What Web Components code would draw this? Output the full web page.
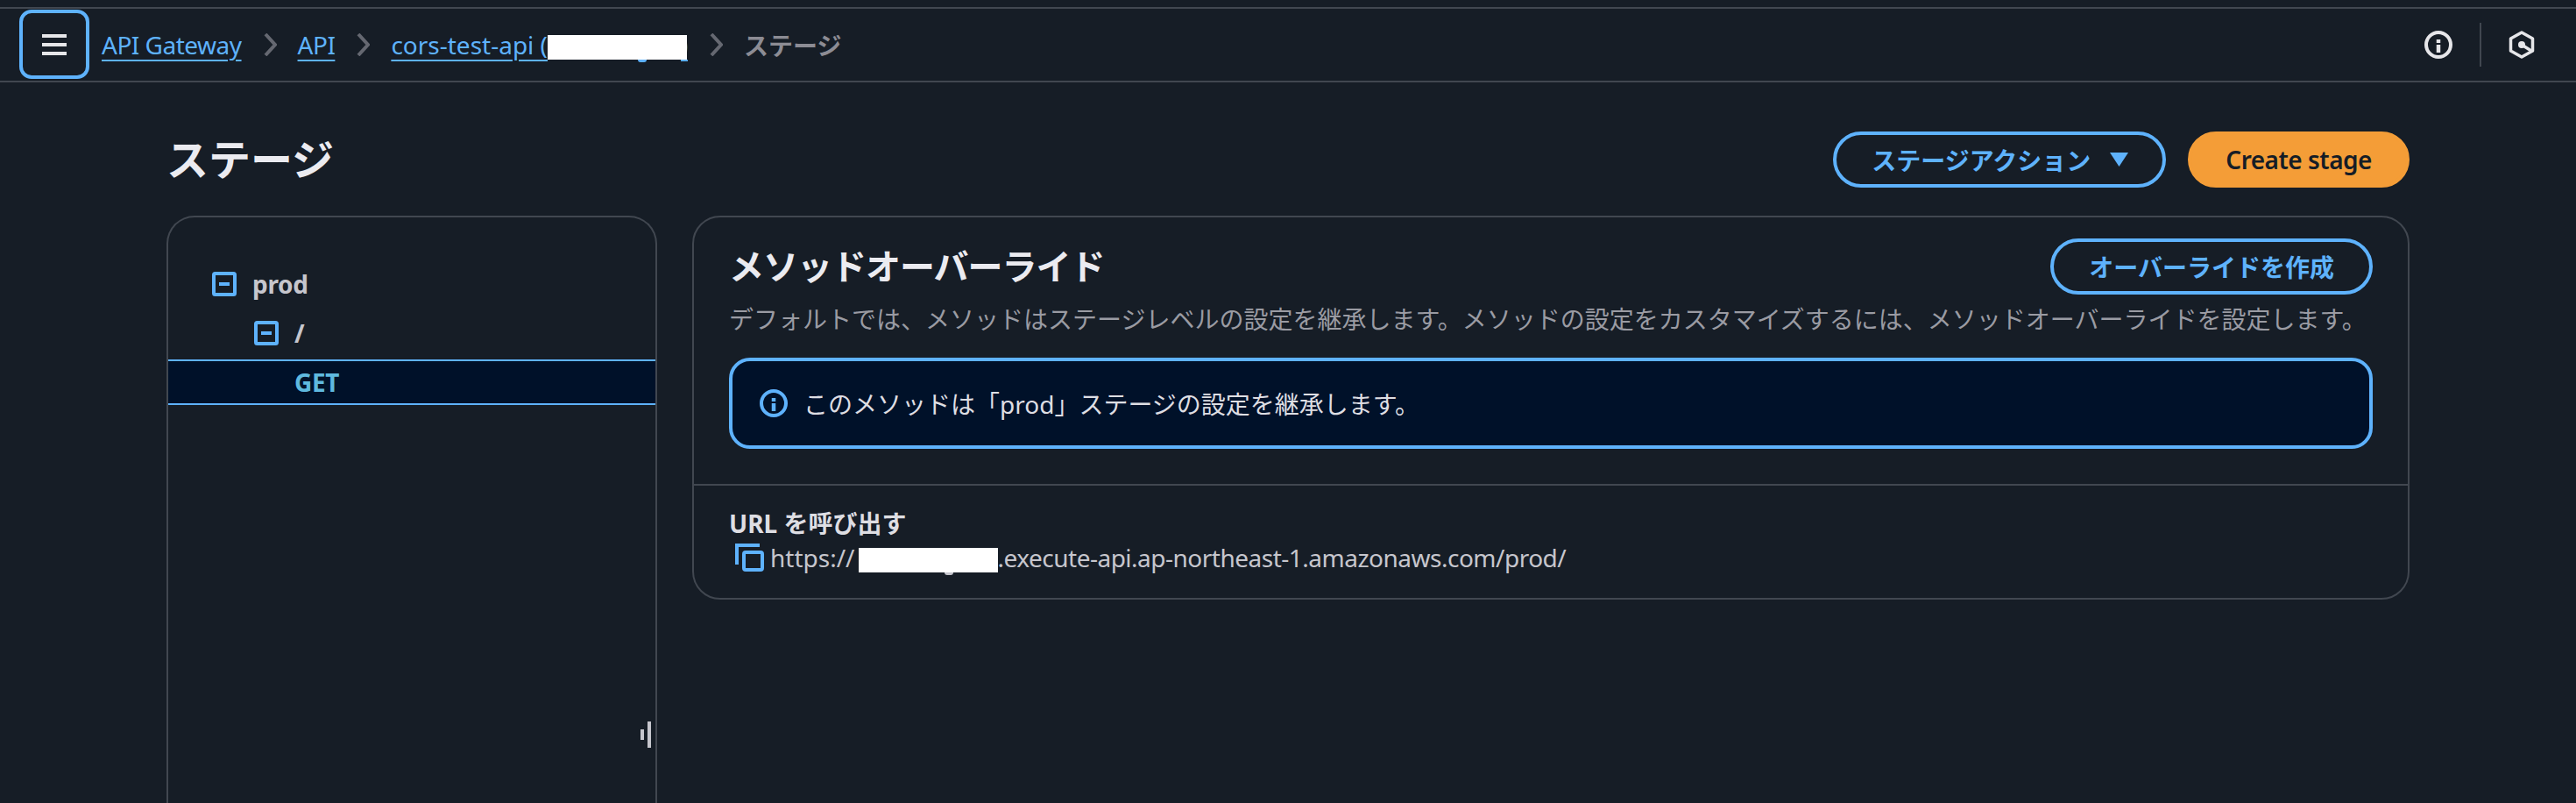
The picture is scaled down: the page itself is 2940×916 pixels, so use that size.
<!doctype html>
<html lang="ja">
<head>
<meta charset="utf-8">
<title>ステージ</title>
<style>
  html,body{margin:0;height:916px;overflow:hidden;background:#161d26;}
  body{font-family:"Noto Sans","Noto Sans CJK JP",sans-serif;font-size:28px;color:#c6c6cd;}
  stage-page{height:100%;}
</style>
</head>
<body>
<stage-page>
  <top-bar slot="top">
    <bread-link>API Gateway</bread-link>
    <bread-link>API</bread-link>
    <bread-link><span style="letter-spacing:0">cors-test-api (</span><redact-box w="159" h="28" tail="103" cut="7"></redact-box>)</bread-link>
    <bread-here>ステージ</bread-here>
  </top-bar>
  <page-head slot="head">ステージ</page-head>
  <stage-tree slot="tree"></stage-tree>
  <method-panel slot="panel"></method-panel>
</stage-page>

<script>
const base=`:host{box-sizing:border-box} *{box-sizing:border-box}`
const BLUE='#5eb2fc'

class StagePage extends HTMLElement{
    constructor(){
        super()
        this.attachShadow({mode:'open'}).innerHTML=`
        <style>${base}
            :host{display:flex;flex-direction:column}
            .strip{height:10px;border-bottom:2px solid #414750;flex:none}
            .main{flex:1;display:flex;flex-direction:column;padding:56px 190px 0;min-height:0}
            .cols{flex:1;display:grid;grid-template-columns:560px 1fr;column-gap:40px;margin-top:32px;min-height:0}
        </style>
        <div class="strip"></div>
        <slot name="top"></slot>
        <div class="main">
            <slot name="head"></slot>
            <div class="cols">
                <slot name="tree"></slot>
                <slot name="panel"></slot>
            </div>
        </div>`
    }
}

class TopBar extends HTMLElement{
    constructor(){
        super()
        this.attachShadow({mode:'open'}).innerHTML=`
        <style>${base}
            :host{display:flex;align-items:center;height:84px;border-bottom:2px solid #414750;padding:1px 0 2px 22px}
            .menu{width:80px;height:79px;border:4px solid ${BLUE};border-radius:14px;background:none;padding:0;display:flex;align-items:center;justify-content:center;margin-right:14px}
            .crumbs{flex:1;display:flex;align-items:center}
            .icons{display:flex;align-items:center}
            .sep{width:2px;height:50px;background:#414750;margin:0 31px}
            svg{display:block}
            .i2{margin-right:47px}
        </style>
        <button class="menu" aria-label="menu">
            <svg width="28" height="24" viewBox="0 0 28 24"><path d="M0 2h28M0 12h28M0 22h28" stroke="#e6e6e9" stroke-width="4"/></svg>
        </button>
        <div class="crumbs"><slot></slot></div>
        <div class="icons">
            <svg width="32" height="32" viewBox="0 0 32 32" fill="none" stroke="#e6e6e9" stroke-width="4"><circle cx="16" cy="16" r="14"/><path d="M16 10v4M16 16v9" stroke-width="4.5"/></svg>
            <div class="sep"></div>
            <svg class="i2" width="30" height="32" viewBox="0 0 30 32" fill="none" stroke="#e6e6e9" stroke-width="3.5"><path d="M15 2 27.5 9v14L15 30 2.500 23V9z" stroke-linejoin="round"/><circle cx="15" cy="16" r="4" fill="#e6e6e9" stroke="none"/><path d="M15 16l11 7"/></svg>
        </div>`
    }
}

class BreadLink extends HTMLElement{
    constructor(){
        super()
        this.attachShadow({mode:'open'}).innerHTML=`
        <style>${base}
            :host{display:inline-flex;align-items:center;color:${BLUE};letter-spacing:-.5px}
            a{color:inherit;text-decoration:underline;text-decoration-thickness:2px;text-underline-offset:6px;white-space:nowrap;line-height:36px}
            svg{margin:0 24px 0 25px;display:block}
        </style>
        <a href="#"><slot></slot></a>
        <svg width="15" height="26" viewBox="0 0 15 26" fill="none" stroke="#656871" stroke-width="4"><path d="M2 1l11 12L2 25"/></svg>`
    }
}

class BreadHere extends HTMLElement{
    constructor(){
        super()
        this.attachShadow({mode:'open'}).innerHTML=`
        <style>:host{display:inline-block;color:#8c8c94;font-weight:700;white-space:nowrap}</style><slot></slot>`
    }
}

// white patch over hidden account ids
class RedactBox extends HTMLElement{
    connectedCallback(){
        if(this.shadowRoot) return
        const w=this.getAttribute('w'),h=this.getAttribute('h')
        const tail=this.getAttribute('tail'),cut=this.getAttribute('cut')||0,pad=this.getAttribute('pad')||0
        this.attachShadow({mode:'open'}).innerHTML=`
        <style>
            :host{display:inline-block;position:relative;z-index:1;width:${w}px;height:${h}px;background:#fff;vertical-align:-6px;margin:0 -${cut}px 0 ${pad}px}
            i{position:absolute;left:${tail}px;top:100%;width:10px;height:3px;background:currentColor;border-radius:0 0 4px 4px}
        </style>
        ${tail?'<i></i>':''}`
    }
}

class AwsButton extends HTMLElement{
    constructor(){
        super()
        this.attachShadow({mode:'open'}).innerHTML=`
        <style>${base}
            :host{display:inline-block}
            button{font:inherit;font-weight:700;height:64px;border-radius:32px;border:4px solid ${BLUE};background:none;color:${BLUE};padding:0 40px;display:flex;align-items:center;gap:22px;white-space:nowrap}
            :host([primary]) button{background:#f49d37;border-color:#f49d37;color:#161d26;font-weight:600;letter-spacing:-.5px;padding:0 39px}
        </style>
        <button><slot></slot></button>`
    }
}

class PageHead extends HTMLElement{
    constructor(){
        super()
        this.attachShadow({mode:'open'}).innerHTML=`
        <style>${base}
            :host{display:flex;align-items:center;justify-content:space-between;height:64px}
            h1{margin:0;font-size:48px;font-weight:700;color:#ebebf0;line-height:64px}
            .btns{display:flex;gap:25px}
            svg{display:block;margin-right:-1px}
        </style>
        <h1><slot></slot></h1>
        <div class="btns">
            <aws-button>ステージアクション<svg width="21" height="16" viewBox="0 0 21 16"><path d="M0 0h21L10.500 16z" fill="${BLUE}"/></svg></aws-button>
            <aws-button primary>Create stage</aws-button>
        </div>`
    }
}

class TreeRow extends HTMLElement{
    constructor(){
        super()
        this.attachShadow({mode:'open'}).innerHTML=`
        <style>${base}
            :host{display:flex;align-items:center;gap:18px;height:56px;font-weight:700;color:#c6c6cd;letter-spacing:-.3px;padding-left:calc(50px + var(--lvl,0) * 48px)}
            :host([selected]){height:52px;margin-top:2px;color:#5fb9df;background:#001129;border-top:2px solid ${BLUE};border-bottom:2px solid ${BLUE}}
            svg{display:block;flex:none}
        </style>
        <svg width="28" height="28" viewBox="0 0 28 28" fill="none"><rect x="2" y="2" width="24" height="24" rx="1.5" stroke="${BLUE}" stroke-width="4"/><path d="M8 14h12" stroke="${BLUE}" stroke-width="4"/></svg>
        <slot></slot>`
        if(this.hasAttribute('leaf')) this.shadowRoot.querySelector('svg').style.visibility='hidden'
    }
}

class StageTree extends HTMLElement{
    constructor(){
        super()
        this.attachShadow({mode:'open'}).innerHTML=`
        <style>${base}
            :host{display:block;border:2px solid #414750;border-bottom:0;border-radius:32px 32px 0 0;padding-top:48px;position:relative}
            .grip{position:absolute;left:539px;top:575px;width:12px;height:30px}
            .grip i{position:absolute;width:4px;background:#c6c6cd}
            .grip i:first-child{left:0;top:9px;height:12px}
            .grip i:last-child{left:8px;top:0;height:30px}
        </style>
        <tree-row>prod</tree-row>
        <tree-row style="--lvl:1">/</tree-row>
        <tree-row style="--lvl:1" selected leaf>GET</tree-row>
        <div class="grip"><i></i><i></i></div>`
    }
}

class InfoAlert extends HTMLElement{
    constructor(){
        super()
        this.attachShadow({mode:'open'}).innerHTML=`
        <style>${base}
            :host{display:flex;align-items:center;gap:18px;height:104px;background:#001129;border:4px solid ${BLUE};border-radius:24px;padding:0 31px;color:#dedee3}
            svg{display:block;flex:none}
        </style>
        <svg width="32" height="32" viewBox="0 0 32 32" fill="none" stroke="${BLUE}" stroke-width="4"><circle cx="16" cy="16" r="14"/><path d="M16 10v4M16 16v9" stroke-width="4.500"/></svg>
        <div><slot></slot></div>`
    }
}

class CopyUrl extends HTMLElement{
    constructor(){
        super()
        this.attachShadow({mode:'open'}).innerHTML=`
        <style>${base}
            :host{display:flex;align-items:center;line-height:36px;white-space:nowrap;color:#c6c6cd;margin-top:3px;letter-spacing:-.5px}
            svg{display:block;flex:none;margin:0 7px 0 7px}
        </style>
        <svg width="33" height="32" viewBox="0 0 33 32" fill="none" stroke="${BLUE}" stroke-width="4"><path d="M2 24V2h26"/><rect x="10" y="10" width="21" height="20" rx="2"/></svg>
        <span><slot></slot></span>`
    }
}

class MethodPanel extends HTMLElement{
    constructor(){
        super()
        this.attachShadow({mode:'open'}).innerHTML=`
        <style>${base}
            :host{display:block;align-self:start;border:2px solid #414750;border-radius:32px;height:438px}
            .top{padding:24px 40px 0;height:306px;border-bottom:2px solid #414750}
            .hd{display:flex;justify-content:space-between;align-items:center;height:64px}
            h2{margin:0;font-size:40px;font-weight:700;color:#ebebf0;line-height:56px;letter-spacing:-1px}
            p{margin:10px 0 26px;color:#9a9ba3;line-height:36px;white-space:nowrap}
            .bot{padding:25px 40px}
            .lbl{font-weight:700;color:#dedee3;line-height:36px}
        </style>
        <div class="top">
            <div class="hd"><h2>メソッドオーバーライド</h2><aws-button>オーバーライドを作成</aws-button></div>
            <p>デフォルトでは、メソッドはステージレベルの設定を継承します。メソッドの設定をカスタマイズするには、メソッドオーバーライドを設定します。</p>
            <info-alert>このメソッドは「prod」ステージの設定を継承します。</info-alert>
        </div>
        <div class="bot">
            <div class="lbl">URL を呼び出す</div>
            <copy-url><span style="letter-spacing:0">https://</span><redact-box w="159" h="28" tail="98" pad="4"></redact-box>.execute-api.ap-northeast-1.amazonaws.com/prod/</copy-url>
        </div>`
    }
}

customElements.define('redact-box',RedactBox)
customElements.define('aws-button',AwsButton)
customElements.define('bread-link',BreadLink)
customElements.define('bread-here',BreadHere)
customElements.define('top-bar',TopBar)
customElements.define('page-head',PageHead)
customElements.define('tree-row',TreeRow)
customElements.define('stage-tree',StageTree)
customElements.define('info-alert',InfoAlert)
customElements.define('copy-url',CopyUrl)
customElements.define('method-panel',MethodPanel)
customElements.define('stage-page',StagePage)
</script>
</body>
</html>
